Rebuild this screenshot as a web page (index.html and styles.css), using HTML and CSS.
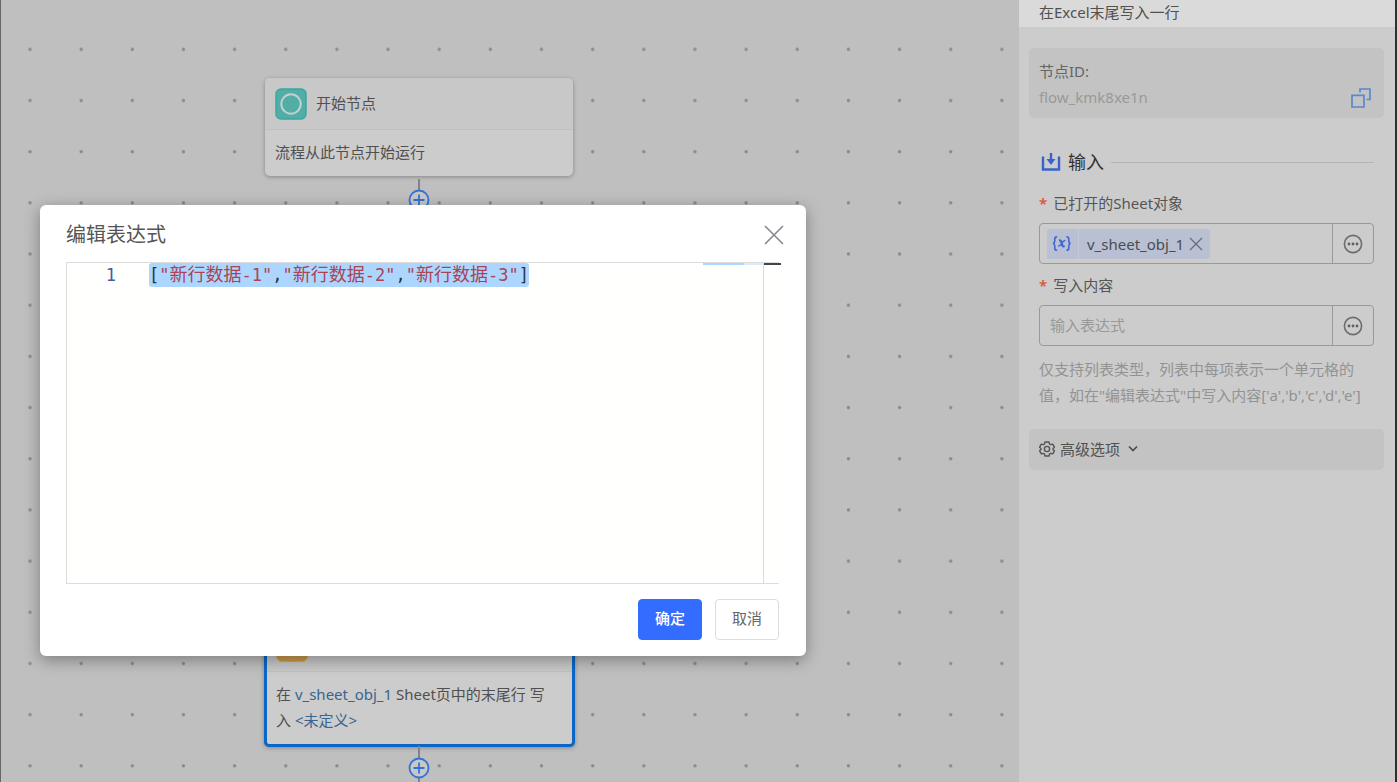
FILE: index.html
```html
<!DOCTYPE html>
<html lang="zh-CN">
<head>
<meta charset="utf-8">
<title>编辑表达式</title>
<link rel="stylesheet" href="styles.css">
</head>
<body>
<div class="app">
  <main class="canvas">
    <svg class="grid" aria-hidden="true">
      <defs>
        <pattern id="dots" x="3" y="23" width="51.15" height="51.18" patternUnits="userSpaceOnUse">
          <circle cx="26" cy="26.3" r="1.7" fill="#848b93"/>
        </pattern>
      </defs>
      <rect width="100%" height="100%" fill="url(#dots)"/>
    </svg>

    <article class="node node-start">
      <header class="node-head">
        <svg class="node-icon" viewBox="0 0 32 32" aria-hidden="true">
          <rect x="1" y="1" width="30" height="30" rx="5" fill="#52ada6" stroke="#38a89f" stroke-width="1.500"/>
          <circle cx="16" cy="16" r="9.7" fill="none" stroke="#c3d2d0" stroke-width="2"/>
        </svg>
        <span>开始节点</span>
      </header>
      <p class="node-body">流程从此节点开始运行</p>
    </article>

    <svg class="link link-top" viewBox="0 0 22 36" aria-hidden="true">
      <path d="M11 0v12" stroke="#7d858f" stroke-width="2"/>
      <circle cx="11" cy="21" r="9.5" fill="#c8c8c8" stroke="#3373d6" stroke-width="1.8"/>
      <path d="M5.500 21h11M11 15.500v11" stroke="#3373d6" stroke-width="1.8"/>
    </svg>

    <article class="node node-write">
      <header class="node-head">
        <svg class="node-icon" viewBox="0 0 32 32" aria-hidden="true">
          <rect x="1" y="1" width="30" height="30" rx="5" fill="#c99b4e" stroke="#d39a38" stroke-width="1.500"/>
        </svg>
      </header>
      <p class="node-body">在 <b class="ref">v_sheet_obj_1</b> Sheet页中的末尾行 写入 <b class="ref">&lt;未定义&gt;</b></p>
    </article>

    <svg class="link link-bottom" viewBox="0 0 22 36" aria-hidden="true">
      <path d="M11 0v36" stroke="#7d858f" stroke-width="2"/>
      <circle cx="11" cy="22" r="9.5" fill="#c8c8c8" stroke="#3373d6" stroke-width="1.8"/>
      <path d="M5.500 22h11M11 16.500v11" stroke="#3373d6" stroke-width="1.8"/>
    </svg>
  </main>

  <aside class="panel">
    <h2 class="panel-title">在Excel末尾写入一行</h2>
    <div class="panel-body">
      <section class="id-card">
        <div class="id-text">
          <div class="id-label">节点ID:</div>
          <div class="id-value">flow_kmk8xe1n</div>
        </div>
        <button class="icon-btn" type="button" aria-label="复制">
          <svg width="20" height="20" viewBox="0 0 20 20" fill="none" stroke="#5c87cb" stroke-width="1.7">
            <path d="M1 7.300h12v11.700H1z"/>
            <path d="M9 4.500V1h10v10.500h-3.500"/>
          </svg>
        </button>
      </section>

      <section class="inputs">
        <h3 class="section-title">
          <svg width="20" height="20" viewBox="0 0 20 20" fill="none" aria-hidden="true">
            <path d="M2 4.500v13h16v-13" stroke="#3a62cf" stroke-width="2.400"/>
            <path d="M10 1v8" stroke="#3a62cf" stroke-width="2.400"/>
            <path d="M5.500 7h9L10 13z" fill="#3a62cf"/>
          </svg>
          <span>输入</span>
        </h3>

        <label class="label" for="sheet"><i class="star">*</i>已打开的Sheet对象</label>
        <div class="field">
          <div class="tag">
            <svg class="tag-icon" width="32" height="30" viewBox="0 0 32 30" fill="none" stroke="#4267cf" stroke-width="1.700" aria-hidden="true">
              <path d="M10.500 7.500c-2 0-2.500.8-2.500 2.500v2c0 1.500-.5 2.300-1.800 2.500 1.300.2 1.800 1 1.800 2.500v2c0 1.700.5 2.500 2.500 2.500M20 7.500c2 0 2.500.8 2.500 2.500v2c0 1.500.5 2.300 1.800 2.500-1.300.2-1.800 1-1.800 2.500v2c0 1.700-.5 2.500-2.500 2.500"/>
              <path d="M12.500 11.500c1.400-.4 2 .1 2.300 1.200l.9 3.400c.3 1.200 1 1.600 2.500 1" stroke-width="2.400"/>
              <path d="M19 11.500c-1.500-.2-2.500 1-3.600 2.700s-2.200 3.200-3.800 2.900" stroke-width="1.500"/>
            </svg>
            <span class="tag-text">v_sheet_obj_1</span>
            <button class="icon-btn" type="button" aria-label="移除">
              <svg width="14" height="14" viewBox="0 0 14 14" stroke="#696e79" stroke-width="1.400"><path d="M1 1l12 12M13 1L1 13"/></svg>
            </button>
          </div>
          <input class="text" id="sheet" type="text">
          <button class="more" type="button" aria-label="更多">
            <svg width="20" height="20" viewBox="0 0 20 20"><circle cx="10" cy="10" r="8.600" fill="none" stroke="#6c6c6c" stroke-width="1.600"/><g fill="#5f5f5f"><circle cx="6" cy="10" r="1.400"/><circle cx="10" cy="10" r="1.400"/><circle cx="14" cy="10" r="1.400"/></g></svg>
          </button>
        </div>

        <label class="label" for="content"><i class="star">*</i>写入内容</label>
        <div class="field">
          <input class="text" id="content" type="text" placeholder="输入表达式">
          <button class="more" type="button" aria-label="更多">
            <svg width="20" height="20" viewBox="0 0 20 20"><circle cx="10" cy="10" r="8.600" fill="none" stroke="#6c6c6c" stroke-width="1.600"/><g fill="#5f5f5f"><circle cx="6" cy="10" r="1.400"/><circle cx="10" cy="10" r="1.400"/><circle cx="14" cy="10" r="1.400"/></g></svg>
          </button>
        </div>
        <p class="help">仅支持列表类型，列表中每项表示一个单元格的<br>值，如在"编辑表达式"中写入内容['a','b','c','d','e']</p>
      </section>

      <button class="advanced" type="button">
        <svg width="16" height="16" viewBox="0 0 16 16" fill="none" stroke="#555" stroke-width="1.400" aria-hidden="true">
          <path d="M6 1h4l.5 2 1.200.7 2-.6 1.800 3.200L14 7.500v1l1.500 1.200-1.800 3.200-2-.6-1.200.7-.5 2H6l-.5-2-1.200-.7-2 .6L.5 9.700 2 8.500v-1L.5 6.300l1.800-3.200 2 .6L5.500 3z" stroke-linejoin="round"/>
          <circle cx="8" cy="8" r="2.600"/>
        </svg>
        <span>高级选项</span>
        <svg class="chevron" width="10" height="8" viewBox="0 0 10 8" fill="none" stroke="#4d4d4d" stroke-width="1.700" aria-hidden="true"><path d="M1 1.500l4 4 4-4"/></svg>
      </button>
    </div>
  </aside>
</div>

<div class="dialog" role="dialog" aria-labelledby="dialog-title">
  <header class="dialog-head">
    <h1 class="dialog-title" id="dialog-title">编辑表达式</h1>
    <button class="icon-btn" type="button" aria-label="关闭">
      <svg width="20" height="20" viewBox="0 0 20 20" stroke="#85888d" stroke-width="1.600"><path d="M1 1l18 18M19 1L1 19"/></svg>
    </button>
  </header>
  <div class="editor">
    <div class="line-no">1</div>
    <pre class="code"><code class="selected"><span class="punct">[</span>"<span class="han">新行数据</span>-1"<span class="punct">,</span>"<span class="han">新行数据</span>-2"<span class="punct">,</span>"<span class="han">新行数据</span>-3"<span class="punct">]</span></code></pre>
    <div class="minimap"></div>
    <div class="ruler"></div>
  </div>
  <footer class="dialog-foot">
    <button class="btn btn-primary" type="button">确定</button>
    <button class="btn" type="button">取消</button>
  </footer>
</div>
</body>
</html>
```
FILE: styles.css
```css
* {
  box-sizing: border-box;
}

body {
  margin: 0;
  height: 100vh;
  overflow: hidden;
  font-family: "Noto Sans", "Noto Sans CJK SC", sans-serif;
  font-size: 15px;
  line-height: 26px;
  color: #505050;
  background: #bfbfbf;
}

h1, h2, h3, p, pre {
  margin: 0;
  font-weight: 400;
}

button, input {
  font: inherit;
  color: inherit;
}

svg {
  display: block;
  flex: none;
}

.app {
  display: flex;
  height: 100%;
  border-left: 1px solid #666;
  border-right: 2px solid #303030;
}

/* Flow canvas */
.canvas {
  position: relative;
  flex: 1;
  overflow: hidden;
}

.grid {
  width: 100%;
  height: 100%;
}

.node {
  position: absolute;
  border-radius: 5px;
  background: #ccc;
  box-shadow: 0 1px 4px rgba(0, 0, 0, 0.3);
}

.node-start {
  left: 264px;
  top: 78px;
  width: 308px;
}

.node-write {
  left: 263px;
  top: 617px;
  width: 311px;
  border: 3px solid #0b67c7;
}

.node-head {
  display: flex;
  align-items: center;
  gap: 9px;
  height: 52px;
  padding: 0 10px;
  border-bottom: 1px solid #c0c0c0;
  border-radius: 5px 5px 0 0;
  background: #c8c8c8;
}

.node-write .node-head,
.node-write .node-body {
  padding-left: 9px;
}

.node-head span {
  padding-bottom: 2px;
}

.node-icon {
  width: 32px;
  height: 32px;
}

.node-body {
  padding: 9px 20px 11px 10px;
}

.ref {
  font-weight: 400;
  color: #386591;
}

.link {
  position: absolute;
  left: 407px;
  width: 22px;
  height: 36px;
}

.link-top {
  top: 179px;
}

.link-bottom {
  top: 746px;
}

/* Property panel */
.panel {
  width: 376px;
  background: #ccc;
}

.panel-title {
  padding: 0 20px 3px;
  font-size: 15px;
  line-height: 24px;
  background: #dadada;
}

.panel-body {
  padding: 21px 11px 0 10px;
}

.id-card {
  display: flex;
  justify-content: space-between;
  align-items: flex-end;
  padding: 10px 13px 8px 10px;
  border-radius: 5px;
  background: #c3c3c3;
}

.id-label {
  color: #656565;
}

.id-value {
  color: #999;
}

.icon-btn {
  padding: 0;
  border: 0;
  background: none;
}

.id-card .icon-btn {
  margin-bottom: 2px;
}

.inputs {
  padding: 31px 10px 21px;
}

.section-title {
  display: flex;
  align-items: center;
  gap: 7px;
  margin: 0 0 15px 2px;
  font-size: 18px;
  color: #333;
}

.section-title::after {
  content: "";
  flex: 1;
  height: 1px;
  background: #b5b5b5;
}

.label {
  display: flex;
  gap: 6px;
  margin-bottom: 7px;
  color: #555;
}

.star {
  font-style: normal;
  font-weight: 600;
  color: #db5630;
}

.field {
  display: flex;
  align-items: center;
  height: 41px;
  margin-bottom: 8px;
  border: 1px solid #999;
  border-radius: 4px;
}

.tag {
  display: flex;
  align-items: center;
  height: 30px;
  margin-left: 7px;
  padding-right: 7px;
  border-radius: 3px;
  background: #b9c0d3;
}

.tag-icon {
  border-right: 1px solid #c6cad6;
}

.tag-text {
  margin: 0 5px 0 8px;
  color: #4a4c52;
}

.text {
  flex: 1;
  min-width: 0;
  padding: 0 10px 1px;
  border: 0;
  outline: 0;
  background: none;
}

.text::placeholder {
  color: #999;
  opacity: 1;
}

.more {
  display: flex;
  justify-content: center;
  align-items: center;
  align-self: stretch;
  width: 41px;
  padding: 0;
  border: 0;
  border-left: 1px solid #999;
  background: none;
}

.help {
  margin-top: 10px;
  white-space: nowrap;
  color: #939393;
}

.advanced {
  display: flex;
  align-items: center;
  gap: 5px;
  width: 100%;
  height: 41px;
  padding: 0 10px 1px;
  border: 0;
  border-radius: 5px;
  background: #c3c3c3;
}

.chevron {
  margin-left: 3px;
}

/* Expression dialog */
.dialog {
  position: absolute;
  left: 40px;
  top: 205px;
  width: 766px;
  padding: 16px 27px 16px 26px;
  border-radius: 6px;
  background: #fff;
  box-shadow: 0 4px 16px rgba(0, 0, 0, 0.35);
}

.dialog-head {
  display: flex;
  justify-content: space-between;
  align-items: center;
  height: 28px;
}

.dialog-head .icon-btn {
  margin-right: -5px;
}

.dialog-title {
  font-size: 20px;
  color: #555;
}

.editor {
  display: flex;
  align-items: flex-start;
  height: 322px;
  margin-top: 13px;
  border: 1px solid #dcdcdc;
  border-right: 0;
  background: #fffffd;
  font-family: "DejaVu Sans Mono", "Noto Sans CJK SC", monospace;
  font-size: 17px;
  line-height: 24px;
}

.line-no {
  width: 49px;
  text-align: right;
  color: #4959a5;
}

.code {
  flex: 1;
  margin-left: 33px;
  font: inherit;
}

.selected {
  display: inline-block;
  height: 24px;
  border-radius: 3px;
  background: #add6ff;
  font: inherit;
  color: #a84454;
}

.han {
  font-size: 18px;
}

.punct {
  color: #263645;
}

.minimap {
  width: 60px;
  height: 2px;
  background: linear-gradient(90deg, #add6ff 41px, #dcebfa 41px);
}

.ruler {
  align-self: stretch;
  width: 18px;
  margin-right: -2px;
  border-left: 1px solid #dcdcdc;
  background: linear-gradient(#454545, #454545) top / 100% 2px no-repeat;
}

.dialog-foot {
  display: flex;
  justify-content: flex-end;
  gap: 13px;
  margin-top: 15px;
}

.btn {
  width: 64px;
  height: 41px;
  padding: 0 0 3px;
  border: 1px solid #ddd;
  border-radius: 4px;
  background: #fff;
  color: #666;
}

.btn-primary {
  border-color: #336dff;
  background: #336dff;
  color: #fff;
  font-weight: 500;
}
```
